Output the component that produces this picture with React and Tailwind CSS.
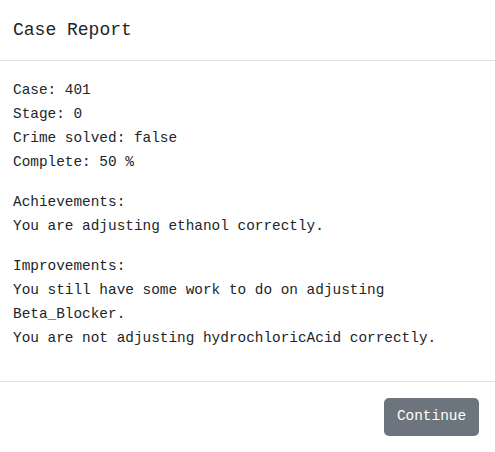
export default function App() {
  return (
    <div className="w-[495px] h-[452px] bg-white text-[#212529] font-['Liberation_Mono',monospace] overflow-hidden">
      <div className="h-[61px] flex items-center px-[13px] border-b border-[#dee2e6]">
        <h5 className="text-[18px] leading-[30px]">Case Report</h5>
      </div>
      <div className="px-[13px] pt-[17px] pb-[15px] text-[14.4px] leading-[24px]">
        <p className="mb-4">
          Case: 401
          <br />
          Stage: 0
          <br />
          Crime solved: false
          <br />
          Complete: 50 %
        </p>
        <p className="mb-4">
          Achievements:
          <br />
          You are adjusting ethanol correctly.
        </p>
        <p className="mb-4">
          Improvements:
          <br />
          You still have some work to do on adjusting Beta_Blocker.
          <br />
          You are not adjusting hydrochloricAcid correctly.
        </p>
      </div>
      <div className="flex justify-end border-t border-[#dee2e6] px-[12px] pt-[12px]">
        <button
          type="button"
          className="m-1 h-[38px] w-[95px] rounded-[5px] bg-[#6c757d] text-[14.4px] text-white"
        >
          Continue
        </button>
      </div>
    </div>
  );
}
